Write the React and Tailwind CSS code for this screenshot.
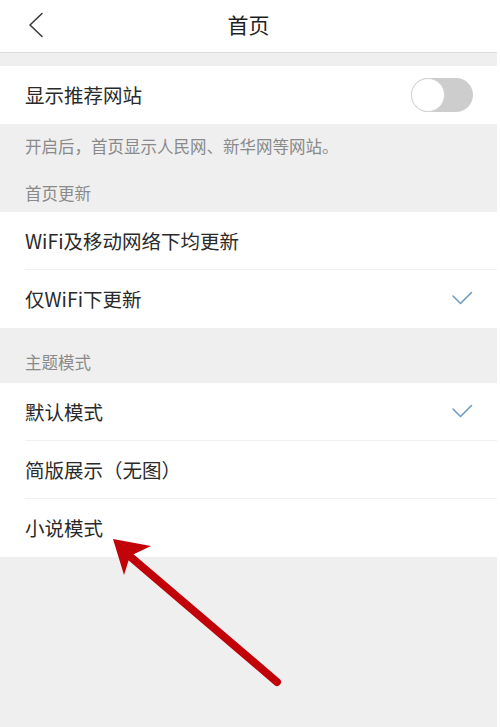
import React from 'react';

const font = { fontFamily: '"Noto Sans CJK SC", "Noto Sans", sans-serif' };

const CheckMark = () => (
  <svg width="22" height="16" viewBox="0 0 22 16" className="shrink-0">
    <path d="M2 5 L9.5 12.5 L20.5 1.5" fill="none" stroke="#6e9cc4" strokeWidth="1.6" strokeLinecap="round" strokeLinejoin="round" />
  </svg>
);

const Row = ({ label, checked, divider }) => (
  <div className="bg-white">
    <div className={(divider ? 'h-[57px]' : 'h-[58px]') + ' flex items-center justify-between pl-[25px] pr-[24px]'}>
      <span className="text-[19.5px] text-[#2a2a2a]">{label}</span>
      {checked && <CheckMark />}
    </div>
    {divider && <div className="ml-[25px] h-px bg-[#f0f0f0]" />}
  </div>
);

const Toggle = () => (
  <div className="w-[62px] h-[34px] rounded-full bg-[#cdcdcd] relative">
    <div className="absolute left-0 top-0 w-[34px] h-[34px] rounded-full bg-white border border-[#d4d4d4]" />
  </div>
);

export default function App() {
  return (
    <div className="bg-white min-h-[727px] w-[500px] relative overflow-hidden" style={font}>
      <div className="w-[497px] min-h-[727px] bg-[#efefef]">
        {/* header */}
        <div className="h-[53px] bg-white border-b border-[#dcdcdc] relative flex items-center justify-center">
          <svg width="16" height="26" viewBox="0 0 16 26" className="absolute left-[28px] top-[12px]">
            <path d="M14 1.5 L2 13 L14 24.5" fill="none" stroke="#3a3a3a" strokeWidth="1.6" strokeLinecap="round" strokeLinejoin="round" />
          </svg>
          <span className="text-[21px] text-[#1f1f1f] -mt-[3px]">首页</span>
        </div>

        <div className="h-[13px]" />

        <div className="bg-white h-[58px] flex items-center justify-between pl-[25px] pr-[24px]">
          <span className="text-[19.5px] text-[#2a2a2a]">显示推荐网站</span>
          <Toggle />
        </div>

        <div className="h-[44px] flex items-center pl-[25px] text-[16.5px] text-[#8a8a8a]">
          开启后，首页显示人民网、新华网等网站。
        </div>
        <div className="h-[44px] flex items-center pt-[6px] pl-[25px] text-[16.5px] text-[#8a8a8a]">
          首页更新
        </div>

        <Row label="WiFi及移动网络下均更新" divider />
        <Row label="仅WiFi下更新" checked />

        <div className="h-[55px] flex items-center pt-[14px] pl-[25px] text-[16.5px] text-[#8a8a8a]">
          主题模式
        </div>

        <Row label="默认模式" checked divider />
        <Row label="简版展示（无图）" divider />
        <Row label="小说模式" />
      </div>

      {/* red annotation arrow */}
      <svg className="absolute left-0 top-0 pointer-events-none" width="500" height="727" viewBox="0 0 500 727">
        <line x1="126" y1="553" x2="277" y2="682" stroke="#c10309" strokeWidth="8" strokeLinecap="round" />
        <polygon points="113,539 151,546 130,556 124,575" fill="#c10309" />
      </svg>
    </div>
  );
}
